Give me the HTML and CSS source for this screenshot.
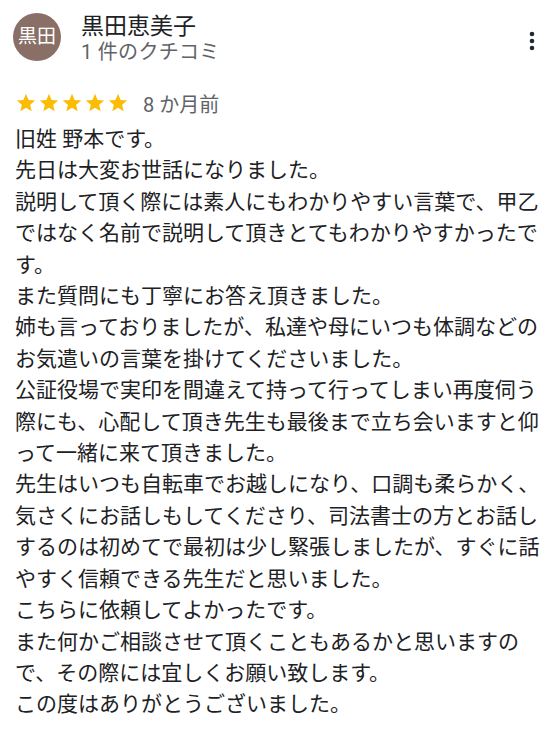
FILE: index.html
```html
<!DOCTYPE html>
<html lang="ja">

<head>
    <meta charset="UTF-8">
    <meta name="viewport" content="width=device-width, initial-scale=1.0">
    <title>クチコミ</title>
    <link rel="stylesheet" href="styles.css">
</head>

<body>
    <div class="review">
        <div class="head">
            <div class="avatar">黒田</div>
            <div class="who">
                <div class="name">黒田恵美子</div>
                <div class="count">1 件のクチコミ</div>
            </div>
            <span class="more">
                <svg width="10" height="24" viewBox="0 0 10 24">
                    <circle cx="5" cy="5" r="2.3" />
                    <circle cx="5" cy="12" r="2.3" />
                    <circle cx="5" cy="19" r="2.3" />
                </svg>
            </span>
        </div>

        <div class="meta">
            <span class="stars">
                <svg viewBox="0 0 24 24"><path d="M12 17.27L18.18 21l-1.64-7.03L22 9.24l-7.19-.61L12 2 9.19 8.63 2 9.24l5.46 4.73L5.82 21z" /></svg>
                <svg viewBox="0 0 24 24"><path d="M12 17.27L18.18 21l-1.64-7.03L22 9.24l-7.19-.61L12 2 9.19 8.63 2 9.24l5.46 4.73L5.82 21z" /></svg>
                <svg viewBox="0 0 24 24"><path d="M12 17.27L18.18 21l-1.64-7.03L22 9.24l-7.19-.61L12 2 9.19 8.63 2 9.24l5.46 4.73L5.82 21z" /></svg>
                <svg viewBox="0 0 24 24"><path d="M12 17.27L18.18 21l-1.64-7.03L22 9.24l-7.19-.61L12 2 9.19 8.63 2 9.24l5.46 4.73L5.82 21z" /></svg>
                <svg viewBox="0 0 24 24"><path d="M12 17.27L18.18 21l-1.64-7.03L22 9.24l-7.19-.61L12 2 9.19 8.63 2 9.24l5.46 4.73L5.82 21z" /></svg>
            </span>
            <span class="date">8 か月前</span>
        </div>

        <div class="text">旧姓 野本です。<br>先日は大変お世話になりました。<br>説明して頂く際には素人にもわかりやすい言葉で、甲乙ではなく名前で説明して頂きとてもわかりやすかったです。<br>また質問にも丁寧にお答え頂きました。<br>姉も言っておりましたが、私達や母にいつも体調などのお気遣いの言葉を掛けてくださいました。<br>公証役場で実印を間違えて持って行ってしまい再度伺う際にも、心配して頂き先生も最後まで立ち会いますと仰って一緒に来て頂きました。<br>先生はいつも自転車でお越しになり、口調も柔らかく、気さくにお話しもしてくださり、司法書士の方とお話しするのは初めてで最初は少し緊張しましたが、すぐに話やすく信頼できる先生だと思いました。<br>こちらに依頼してよかったです。<br>また何かご相談させて頂くこともあるかと思いますので、その際には宜しくお願い致します。<br>この度はありがとうございました。</div>
    </div>
</body>

</html>
```

FILE: styles.css
```css
body {
    margin: 0;
    background: #fff;
    color: #202124;
    font-family: Roboto, "Noto Sans CJK JP", sans-serif;
}

.review {
    padding: 13px 15px 0 15px;
}

.review .head {
    display: flex;
    align-items: flex-start;
}

.review .avatar {
    width: 48px;
    height: 48px;
    margin-left: -2px;
    border-radius: 50%;
    background: #8a6f66;
    color: #fff;
    font-size: 19px;
    line-height: 48px;
    text-align: center;
    flex-shrink: 0;
}

.review .who {
    flex: 1;
    margin-left: 20px;
}

.review .name {
    font-size: 23px;
    line-height: 28px;
    color: #202124;
}

.review .count {
    font-size: 20px;
    line-height: 22px;
    color: #5f6368;
    letter-spacing: 0.3px;
}

.review .more {
    margin-top: 16px;
    margin-right: 5px;
    fill: #1f2a37;
}

.review .meta {
    display: flex;
    align-items: center;
    height: 32px;
    margin-top: 24px;
}

.review .stars {
    display: flex;
    gap: 1px;
}

.review .stars svg {
    width: 22px;
    height: 22px;
    fill: #fbbc04;
}

.review .date {
    margin-left: 14px;
    font-size: 20px;
    color: #5f6368;
}

.review .text {
    margin-top: 5px;
    font-size: 21px;
    line-height: 31.4px;
    color: #202124;
}
```
